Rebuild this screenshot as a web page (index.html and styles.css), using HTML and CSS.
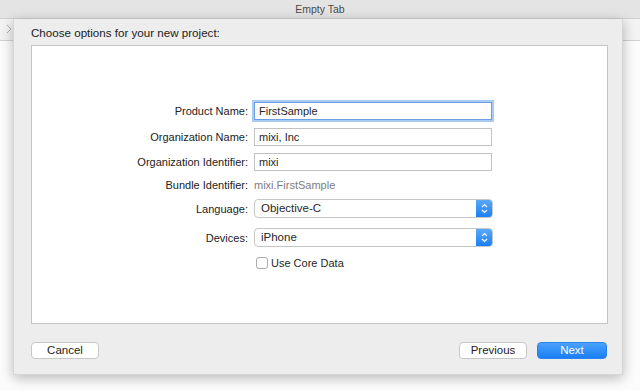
FILE: index.html
```html
<!DOCTYPE html>
<html lang="en">
<head>
  <meta charset="UTF-8" />
  <meta name="viewport" content="width=device-width, initial-scale=1.0"/>
  <title>Empty Tab</title>
  <link rel="stylesheet" href="styles.css">
</head>
<body>

  <div class="titlebar">Empty Tab</div>

  <div class="window">
    <div class="toolbar">
      <svg class="chevron" width="6" height="10" viewBox="0 0 6 10">
        <path d="M1 1 L5 5 L1 9" fill="none" stroke="#b4b4b4" stroke-width="1"/>
      </svg>
    </div>

    <div class="sheet">
      <div class="sheet-title">Choose options for your new project:</div>

      <div class="panel">
        <form class="options">
          <div class="row row-first">
            <label class="label">Product Name:</label>
            <div class="field focused">FirstSample</div>
          </div>
          <div class="row row-field">
            <label class="label">Organization Name:</label>
            <div class="field">mixi, Inc</div>
          </div>
          <div class="row row-field2">
            <label class="label">Organization Identifier:</label>
            <div class="field">mixi</div>
          </div>
          <div class="row row-text">
            <label class="label">Bundle Identifier:</label>
            <div class="value">mixi.FirstSample</div>
          </div>
          <div class="row row-popup">
            <label class="label">Language:</label>
            <div class="popup">
              <span class="popup-text">Objective-C</span>
              <span class="popup-arrows">
                <svg width="7" height="11" viewBox="0 0 7 11">
                  <path d="M1 4 L3.5 1.5 L6 4 M1 7 L3.5 9.5 L6 7" fill="none" stroke="#fff" stroke-width="1.2"/>
                </svg>
              </span>
            </div>
          </div>
          <div class="row row-popup2">
            <label class="label">Devices:</label>
            <div class="popup">
              <span class="popup-text">iPhone</span>
              <span class="popup-arrows">
                <svg width="7" height="11" viewBox="0 0 7 11">
                  <path d="M1 4 L3.5 1.5 L6 4 M1 7 L3.5 9.5 L6 7" fill="none" stroke="#fff" stroke-width="1.2"/>
                </svg>
              </span>
            </div>
          </div>
          <div class="row row-check">
            <span class="label"></span>
            <span class="checkbox"></span>
            <span class="check-text">Use Core Data</span>
          </div>
        </form>
      </div>

      <div class="footer">
        <button type="button" class="btn">Cancel</button>
        <div class="footer-right">
          <button type="button" class="btn">Previous</button>
          <button type="button" class="btn btn-primary">Next</button>
        </div>
      </div>
    </div>
  </div>

</body>
</html>
```

FILE: styles.css
```css
body {
  margin: 0;
  font-family: "Liberation Sans", Arial, sans-serif;
  font-size: 11px;
  color: #262626;
  background: #fcfcfc;
  overflow: hidden;
}
.titlebar {
  height: 19px;
  line-height: 18px;
  text-align: center;
  background: #e4e4e4;
  border-bottom: 1px solid #cfcfcf;
  box-sizing: border-box;
  color: #4a4a4a;
  font-size: 10.5px;
}
.window {
  position: relative;
  height: 372px;
}
.toolbar {
  height: 21px;
  background: #f3f3f3;
  border-bottom: 1px solid #d2d2d2;
}
.chevron {
  display: block;
  padding: 5px 0 0 6px;
}
.sheet {
  position: absolute;
  left: 13px;
  top: 0;
  width: 610px;
  height: 356px;
  box-sizing: border-box;
  padding: 0 14px 0 17px;
  background: #ededed;
  box-shadow: 0 3px 12px rgba(0,0,0,0.28);
  border: 1px solid #d6d6d6;
  border-top: none;
}
.sheet-title {
  height: 26px;
  line-height: 27px;
  font-size: 11.6px;
  color: #222;
}
.panel {
  height: 279px;
  box-sizing: border-box;
  background: #fff;
  border: 1px solid #c4c4c4;
}
.options {
  padding: 56px 0 0 69px;
  margin: 0;
}
.row {
  display: flex;
  align-items: center;
  height: 18px;
}
.row-field { margin-top: 8px; }
.row-field2 { margin-top: 7px; }
.row-text { margin-top: 7px; height: 14px; }
.row-popup { margin-top: 7px; height: 19px; }
.row-popup2 { margin-top: 10px; height: 19px; }
.row-check { margin-top: 10px; height: 12px; }
.label {
  width: 147px;
  margin-right: 6px;
  text-align: right;
  flex-shrink: 0;
  color: #222;
}
.field {
  width: 238px;
  height: 18px;
  box-sizing: border-box;
  border: 1px solid #c2c2c2;
  padding: 0 4px;
  line-height: 16px;
  background: #fff;
}
.focused {
  border-color: #6d9fe2;
  box-shadow: 0 0 0 2px #a9cbf3;
}
.value {
  color: #7d7d7d;
}
.popup {
  display: flex;
  width: 239px;
  height: 19px;
  box-sizing: border-box;
  border: 1px solid #c6c6c6;
  border-radius: 4px;
  background: #fff;
  overflow: hidden;
}
.popup-text {
  flex: 1;
  padding-left: 6px;
  line-height: 17px;
  font-size: 11.5px;
}
.popup-arrows {
  width: 16px;
  display: flex;
  align-items: center;
  justify-content: center;
  background: linear-gradient(#5aa9fb, #1b7ff4);
}
.checkbox {
  width: 12px;
  height: 12px;
  box-sizing: border-box;
  border: 1px solid #adadad;
  border-radius: 3px;
  background: #fff;
  margin-left: 2px;
}
.check-text {
  margin-left: 3px;
}
.footer {
  display: flex;
  justify-content: space-between;
  margin-top: 18px;
  padding-right: 1px;
}
.footer-right {
  display: flex;
  gap: 10px;
}
.btn {
  width: 70px;
  height: 17px;
  padding: 0;
  font-family: inherit;
  font-size: 11.5px;
  color: #222;
  background: #fff;
  border: 1px solid #c7c7c7;
  border-radius: 4px;
  line-height: 15px;
}
.btn:first-child {
  width: 68px;
}
.btn-primary {
  width: 70px;
  color: #fff;
  border-color: #2b82ee;
  background: linear-gradient(#4ba2fc, #1a7ef4);
}
```
